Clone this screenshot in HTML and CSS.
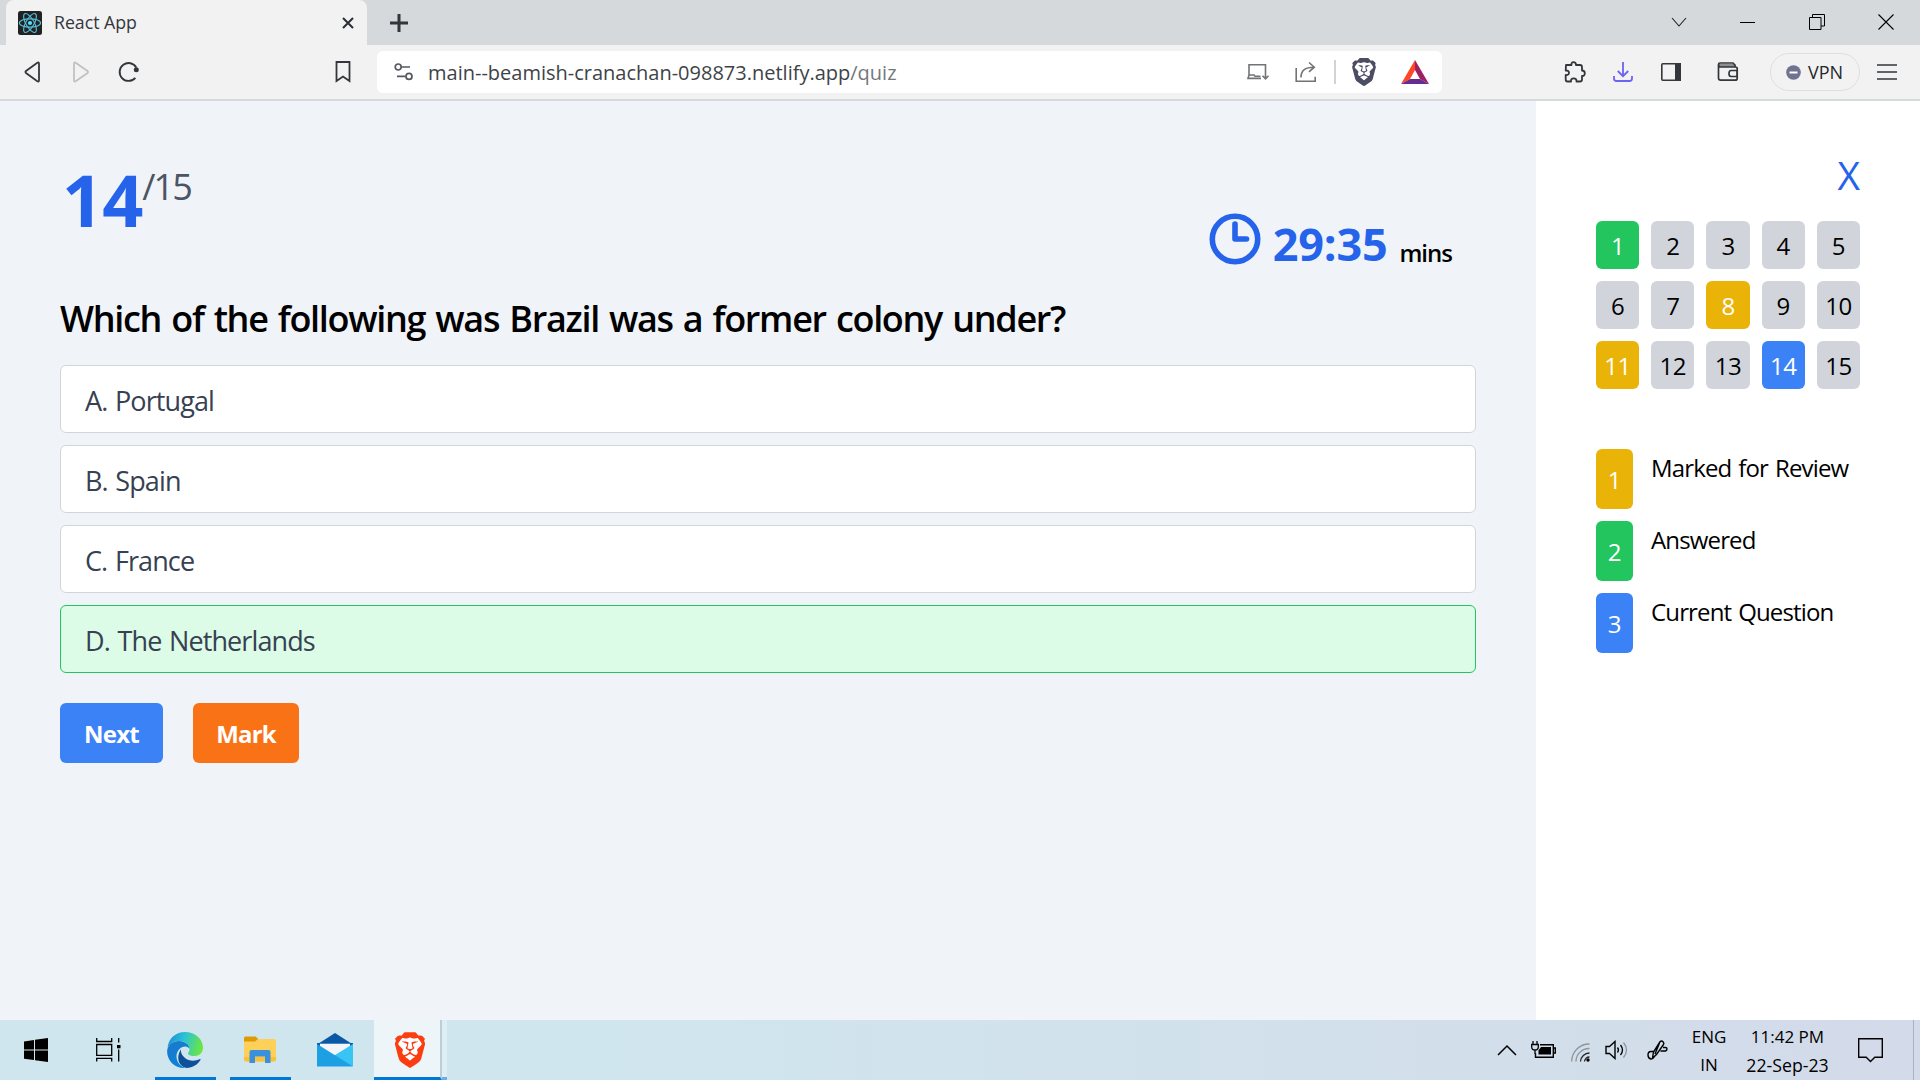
FILE: index.html
```html
<!DOCTYPE html>
<html lang="en">
<head>
<meta charset="utf-8">
<title>React App</title>
<link rel="stylesheet" href="styles.css">
</head>
<body>
<svg class="defs" width="0" height="0">
  <symbol id="lion" viewBox="1.9 0 20.2 24"><path d="M6 3h12l3 5-4 10-5 3-5-3L3.500 8z" fill="#fff"/><path fill="currentColor" d="M15.68 0l2.096 2.38s1.84-.512 2.709.358c.868.87 1.584 1.638 1.584 1.638l-.562 1.381.715 2.047s-2.104 7.98-2.35 8.955c-.486 1.919-.818 2.66-2.198 3.633-1.38.972-3.884 2.66-4.293 2.916-.409.256-.92.692-1.38.692-.46 0-.97-.436-1.38-.692a185.796 185.796 0 01-4.293-2.916c-1.38-.973-1.712-1.714-2.197-3.633-.247-.975-2.351-8.955-2.351-8.955l.715-2.047-.562-1.381s.716-.768 1.585-1.638c.868-.87 2.708-.358 2.708-.358L8.321 0h7.360zm-3.679 14.936c-.14 0-1.038.317-1.758.69-.72.373-1.242.637-1.409.742-.167.104-.065.301.087.409.152.107 2.194 1.690 2.393 1.866.198.175.489.464.687.464.198 0 .49-.29.688-.464.198-.175 2.240-1.759 2.392-1.866.152-.108.254-.305.087-.41-.167-.104-.689-.368-1.410-.741-.72-.373-1.617-.69-1.757-.69zm0-11.278s-.409.001-1.022.206-1.278.46-1.584.46c-.307 0-2.581-.434-2.581-.434S4.119 7.152 4.119 7.849c0 .697.339.881.68 1.243l2.020 2.149c.192.203.59.511.356 1.066-.235.555-.58 1.260-.196 1.977.384.716 1.042 1.194 1.464 1.115.421-.08 1.412-.598 1.776-.834.364-.237 1.518-1.190 1.518-1.554 0-.365-1.193-1.020-1.413-1.168-.22-.15-1.226-.725-1.247-.95-.02-.227-.012-.293.284-.851.297-.559.831-1.304.742-1.800-.089-.495-.95-.753-1.565-.986-.615-.232-1.799-.671-1.947-.74-.148-.068-.11-.133.339-.175.448-.043 1.719-.212 2.292-.052.573.16 1.552.403 1.632.532.079.13.149.134.067.579-.081.445-.5 2.581-.541 2.960-.04.38-.12.63.288.724.409.094 1.097.256 1.333.256s.924-.162 1.333-.256c.408-.093.329-.344.288-.723-.04-.38-.46-2.516-.541-2.961-.082-.445-.012-.45.067-.579.08-.129 1.059-.372 1.632-.532.573-.16 1.845.009 2.292.052.449.042.487.107.339.175-.148.069-1.332.508-1.947.74-.615.233-1.476.49-1.565.986-.09.496.445 1.241.742 1.800.297.558.304.624.284.85-.02.226-1.026.802-1.247.95-.22.15-1.413.804-1.413 1.169 0 .364 1.154 1.317 1.518 1.554.364.236 1.355.755 1.776.834.422.079 1.080-.4 1.464-1.115.384-.716.039-1.422-.195-1.977-.235-.555.163-.863.355-1.066l2.020-2.149c.341-.362.68-.546.68-1.243 0-.697-2.695-3.960-2.695-3.960s-2.274.436-2.580.436c-.307 0-.972-.256-1.585-.461-.613-.205-1.022-.206-1.022-.206z"/></symbol>
</svg>
<div class="screen">
  <div class="tabstrip">
    <div class="tab">
      <svg class="favicon" width="24" height="24" viewBox="0 0 24 24"><rect width="24" height="24" rx="2.5" fill="#222"/><g fill="none" stroke="#53c1de" stroke-width="1.1"><ellipse cx="12" cy="12" rx="10.6" ry="4.1"/><ellipse cx="12" cy="12" rx="10.6" ry="4.1" transform="rotate(60 12 12)"/><ellipse cx="12" cy="12" rx="10.6" ry="4.1" transform="rotate(120 12 12)"/></g><circle cx="12" cy="12" r="2.1" fill="#61dafb"/></svg>
      <span class="tab-title">React App</span>
      <svg class="tab-close" width="14" height="14" viewBox="0 0 14 14"><path d="M2 2l10 10M12 2L2 12" stroke="#2b2f33" stroke-width="2" fill="none"/></svg>
    </div>
    <svg class="new-tab" width="20" height="20" viewBox="0 0 20 20"><path d="M10 1v18M1 10h18" stroke="#33373b" stroke-width="3"/></svg>
    <div class="window-controls">
      <svg width="16" height="16" viewBox="0 0 16 16"><path d="M1 4l7 8 7-8" fill="none" stroke="#222" stroke-width="1.1"/></svg>
      <svg width="16" height="16" viewBox="0 0 16 16"><path d="M0 8.500h15" stroke="#000"/></svg>
      <svg width="16" height="16" viewBox="0 0 16 16"><path d="M.5 3.500h11.500v12H.5zM3.500 3.500v-3h12v11.500h-3.500" fill="none" stroke="#000"/></svg>
      <svg width="16" height="16" viewBox="0 0 16 16"><path d="M.5.5l15 15M15.500.5l-15 15" fill="none" stroke="#000" stroke-width="1.1"/></svg>
    </div>
  </div>

  <div class="toolbar">
    <div class="nav">
      <svg width="18" height="22" viewBox="0 0 18 22"><path d="M13.300 1.700q1.700-.8 1.700 1v16.600q0 1.800-1.700 1L2 12q-1-1 0-2z" fill="none" stroke="#33373b" stroke-width="1.800"/></svg>
      <svg width="18" height="22" viewBox="0 0 18 22"><path d="M3.700 1.700q-1.700-.8-1.700 1v16.600q0 1.800 1.700 1L15.500 12q1-1 0-2z" fill="none" stroke="#bfc1c3" stroke-width="1.800"/></svg>
      <svg class="reload" width="22" height="22" viewBox="0 0 22 22"><path d="M17.300 16.800A8.900 8.900 0 1 1 18.300 6.600" fill="none" stroke="#33373b" stroke-width="1.900"/><circle cx="18.300" cy="8.800" r="2.500" fill="#33373b"/></svg>
    </div>
    <svg class="bookmark" width="16" height="22" viewBox="0 0 16 22"><path d="M1.500 1h13v19L8 15.500 1.500 20z" fill="none" stroke="#33373b" stroke-width="1.800"/></svg>
    <div class="address">
      <svg class="site-info" width="20" height="18" viewBox="0 0 20 18"><g fill="none" stroke="#55595d" stroke-width="1.700"><circle cx="4.200" cy="4" r="3"/><path d="M7.500 4H16M3 13.400h8.500"/><circle cx="15" cy="13.400" r="3"/></g></svg>
      <span class="url">main--beamish-cranachan-098873.netlify.app<span class="url-path">/quiz</span></span>
      <svg class="install" width="24" height="20" viewBox="0 0 24 20"><g fill="none" stroke="#717375" stroke-width="1.600"><path d="M3 13V2.800h16.500v6M3 13l-1 3.400h13M2.500 13H8l1 1.300h5.500M19.500 8v9M16.500 13.800l3 3 3-3"/></g></svg>
      <svg class="share" width="22" height="22" viewBox="0 0 22 22"><g fill="none" stroke="#717375" stroke-width="1.600"><path d="M1.200 7v13.300h19v-4.500M6 16.500Q6 6 19 6.200M14 1.500l5.300 4.700-5.300 4.600"/></g></svg>
      <span class="divider"></span>
      <svg class="shield" width="24" height="28"><use href="#lion"/></svg>
      <svg class="bat" width="28" height="24" viewBox="0 0 28 24"><path d="M14 0L0 24l9-5 5-9z" fill="#ff4724"/><path d="M14 0l14 24-9-5-5-9z" fill="#9e1f63"/><path d="M0 24h28l-9-5H9z" fill="#662d91"/></svg>
    </div>
    <div class="actions">
      <svg class="ext" width="22" height="22" viewBox="0 0 22 22"><path d="M2 4h5.500Q7 1.200 9.500 1.200T12 4h4q2 0 2 2v3.500q2.800 0 2.800 2.800T18 15v3.500q0 2-2 2h-3.500q.2-3.200-2.800-3.200T7 20.500H3.500q-1.800 0-1.800-2V14q3.300.3 3.300-2.200T1.700 9.500z" fill="none" stroke="#33373b" stroke-width="1.800" stroke-linejoin="round"/></svg>
      <svg class="down" width="20" height="20" viewBox="0 0 20 20"><path d="M10 0v14M4.800 9l5.200 5.200L15.200 9M1 14v2.500Q1 19 3.500 19h13q2.500 0 2.500-2.500V14" fill="none" stroke="#6b63f2" stroke-width="1.800"/></svg>
      <svg class="panel" width="20" height="18" viewBox="0 0 20 18"><rect x=".8" y=".8" width="18.400" height="16.400" rx="1" fill="none" stroke="#33373b" stroke-width="1.600"/><path d="M14 0h6v18h-6z" fill="#33373b"/></svg>
      <svg class="wallet" width="22" height="20" viewBox="0 0 22 20"><path d="M2 2h15l2 2v1H2z" fill="#8d8f91"/><path d="M1.500 2.500Q1.500 1 3 1h13l2 2v2M1.500 2.500V16q0 2.200 2.200 2.200h14.500q2 0 2-2V6.500q0-1.500-2-1.500H3.500Q1.500 4.800 1.500 2.500zM20 8.500h-6q-2 0-2 3t2 3h6z" fill="none" stroke="#33373b" stroke-width="1.700"/></svg>
      <span class="vpn"><svg width="15" height="15" viewBox="0 0 15 15"><circle cx="7.500" cy="7.500" r="7.300" fill="#6f7390"/><path d="M3.500 7.500h8" stroke="#fff" stroke-width="2"/></svg><span>VPN</span></span>
      <svg class="menu" width="20" height="16" viewBox="0 0 20 16"><path d="M0 1h20M0 8h20M0 15h20" stroke="#33373b" stroke-width="1.700"/></svg>
    </div>
  </div>

  <div class="page">
    <main class="quiz">
      <header class="quiz-head">
        <div class="counter"><span class="current">14</span><span class="total">/15</span></div>
        <div class="timer">
          <svg width="52" height="52" viewBox="0 0 52 52"><circle cx="26" cy="26" r="22.700" fill="none" stroke="#2563eb" stroke-width="5.600"/><path d="M26 11v15h11.500" fill="none" stroke="#2563eb" stroke-width="5.600" stroke-linecap="round" stroke-linejoin="round"/></svg>
          <span class="time">29:35</span><span class="unit">mins</span>
        </div>
      </header>
      <h1 class="question">Which of the following was Brazil was a former colony under?</h1>
      <div class="options">
        <div class="option">A. Portugal</div>
        <div class="option">B. Spain</div>
        <div class="option">C. France</div>
        <div class="option selected">D. The Netherlands</div>
      </div>
      <div class="buttons">
        <button class="btn next">Next</button>
        <button class="btn mark">Mark</button>
      </div>
    </main>
    <aside class="side">
      <div class="close">X</div>
      <div class="grid">
        <span class="cell answered">1</span><span class="cell">2</span><span class="cell">3</span><span class="cell">4</span><span class="cell">5</span>
        <span class="cell">6</span><span class="cell">7</span><span class="cell review">8</span><span class="cell">9</span><span class="cell">10</span>
        <span class="cell review">11</span><span class="cell">12</span><span class="cell">13</span><span class="cell active">14</span><span class="cell">15</span>
      </div>
      <div class="legend">
        <div class="legend-row"><span class="tag review">1</span><span class="legend-label">Marked for Review</span></div>
        <div class="legend-row"><span class="tag answered">2</span><span class="legend-label">Answered</span></div>
        <div class="legend-row"><span class="tag active">3</span><span class="legend-label">Current Question</span></div>
      </div>
    </aside>
  </div>

  <div class="taskbar">
    <div class="task start"><svg width="24" height="24" viewBox="0 0 24 24"><path d="M0 3.400L10 2v9.500H0zM11 1.800L24 0v11.500H11zM0 12.500h10V22L0 20.700zM11 12.500h13V24l-13-1.800z" fill="#000"/></svg></div>
    <div class="task view"><svg width="25" height="24" viewBox="0 0 25 24"><path d="M.7 0v3.500h15V0M.7 6.500h15v10.800h-15zM.7 23.500v-3.200h15v3.200M22.700 0v4.500M22.700 11.500v12" fill="none" stroke="#000" stroke-width="1.300"/><path d="M21 7h3.500v3.300H21z"/></svg></div>
    <div class="task edge running">
      <svg width="36" height="36" viewBox="0 0 36 36"><defs><linearGradient id="e1" x1="0" y1=".3" x2="1" y2=".5"><stop offset="0" stop-color="#1b8fd6"/><stop offset=".45" stop-color="#2cc3d5"/><stop offset="1" stop-color="#6be83e"/></linearGradient><linearGradient id="e2" x1="0" y1="0" x2=".7" y2="1"><stop offset="0" stop-color="#1c78c9"/><stop offset="1" stop-color="#0a84dc"/></linearGradient><linearGradient id="e3" x1="0" y1="0" x2="1" y2="1"><stop offset="0" stop-color="#0b4f96"/><stop offset="1" stop-color="#12519d"/></linearGradient></defs><path d="M.5 16C1.500 6 9 0 18 0c10.500 0 18 7.500 18 15.500 0 5-3.500 8.500-8.500 8.500-4 0-6.500-1.300-6.500-2.600 0-.8 1.500-1.700 1.500-4.200 0-5-5-8.200-10.500-8.200C6 9 2 12.500.5 16z" fill="url(#e1)"/><path d="M.1 19C.6 12.500 6 9 12 9c6 0 10.500 3.700 10.500 8 0-1-2-2.500-4.500-2.500-4 0-8.500 4-8.500 10 0 5.500 4 10.500 10 11.400C9 37 0 29.500.1 19z" fill="url(#e2)"/><path d="M14 17.500c-4 5.500-4.500 16 5.500 18.400C25.500 36 31 32.500 33.400 28c.5-.9-.2-1.200-.9-.8C28.500 29.200 22 29.500 18 26c-3-2.600-4.500-5.500-4-8.500z" fill="url(#e3)"/></svg>
    </div>
    <div class="task files running"><svg width="32" height="28" viewBox="0 0 32 28"><path d="M0 5V2q0-1.500 1.500-1.500h10L15.500 4 12 8H0z" fill="#dd9a05"/><path d="M0 5.500h11l3-2.500h16q2 0 2 2v18.500q0 2-2 2H2q-2 0-2-2z" fill="#fdd05a"/><path d="M0 21h32v2.500q0 2-2 2H2q-2 0-2-2z" fill="#f9c03c"/><path d="M5.500 27V16q0-2 2-2h17q2 0 2 2v11h-5.500v-6.500H11V27z" fill="#3990dc"/></svg></div>
    <div class="task mail"><svg width="36" height="34" viewBox="0 0 36 34"><path d="M0 11.500L18 0l18 11.500z" fill="#0a58a6"/><path d="M0 10h36v10H0z" fill="#0d5dad"/><path d="M3 10.800h30v6L18 24 3 16z" fill="#f3f5f8"/><path d="M36 11v22H0L18 22z" fill="#38c5f4"/><path d="M0 11v22.500h36L0 11z" fill="#1d9fe3"/></svg></div>
    <div class="task brave running"><svg width="30" height="36"><use href="#lion"/></svg></div>
    <div class="task stacked running"></div>
    <div class="tray">
      <svg class="chev" width="20" height="12" viewBox="0 0 20 12"><path d="M1 11l9-9 9 9" fill="none" stroke="#000" stroke-width="1.500"/></svg>
      <svg class="battery" width="25" height="18" viewBox="0 0 25 18"><path d="M9 3.700h13.300v12.600H4.500v-4M22.500 7h1.800v5h-1.800" fill="none" stroke="#000" stroke-width="1.400"/><path d="M7.500 13.500v-4L10 6h10v7.500z"/><path d="M2 0v3M6 0v3M.7 3.500h6.600V6q0 3-3.300 3T.7 6zM4 9v4" fill="none" stroke="#000" stroke-width="1.300"/></svg>
      <svg class="wifi" width="19" height="19" viewBox="0 0 19 19"><g fill="none" stroke-width="1.300"><path d="M.7 18.500A17.500 17.500 0 0 1 18.500 1M5 18.500A13 13 0 0 1 18.500 5.500" stroke="#8d949d"/><path d="M9.500 18.500A9 9 0 0 1 18.500 10M13.500 18.500a5 5 0 0 1 5-4.500" stroke="#222"/></g><circle cx="17" cy="17" r="1.700"/></svg>
      <svg class="sound" width="23" height="20" viewBox="0 0 23 20"><path d="M1 6.500h3.500L10 1.500v17l-5.500-5H1z" fill="none" stroke="#000" stroke-width="1.400"/><path d="M12.500 7.500q2 2.500 0 5M15.500 5q4 5 0 10" fill="none" stroke="#000" stroke-width="1.300"/><path d="M18.500 2.500q6 7.500 0 15" fill="none" stroke="#8d949d" stroke-width="1.300"/></svg>
      <svg class="pen" width="21" height="20" viewBox="0 0 21 20"><path d="M5.500 18l1-6L13 1.800q1.500-1.600 3 0t.5 2.700L9.500 14.500zM12.500 3L8 14M6.500 11.500H4Q1 11.500 1 15t3 4q2 .2 4-3M16 7.500h2.500q1.500 0 1.500 1.500t-1.500 2H13.500" fill="none" stroke="#000" stroke-width="1.400"/></svg>
      <div class="stack lang"><span>ENG</span><span>IN</span></div>
      <div class="stack clock"><span>11:42 PM</span><span class="date">22-Sep-23</span></div>
      <svg class="notify" width="25" height="25" viewBox="0 0 25 25"><path d="M.7.7h23.600v18.600h-7.500L12.500 23.500 8.200 19.300H.7z" fill="none" stroke="#000" stroke-width="1.400"/></svg>
      <span class="peek"></span>
    </div>
  </div>
</div>
</body>
</html>
```
FILE: styles.css
```css
* { box-sizing: border-box; }
body { margin: 0; font-family: "Open Sans", "Noto Sans", sans-serif; color: #000; }
svg { display: block; flex: none; }
.defs { display: none; }
.screen { width: 1920px; height: 1080px; display: flex; flex-direction: column; overflow: hidden; white-space: nowrap; }

/* Tab strip */
.tabstrip { height: 45px; flex: none; background: #d5d9dc; display: flex; align-items: center; padding-left: 6px; }
.tab { width: 361px; height: 45px; background: #f2f2f2; border-radius: 8px 8px 0 0; display: flex; align-items: center; padding: 0 12px; }
.tab-title { flex: 1; margin-left: 12px; font-size: 17.700px; line-height: 22px; padding-bottom: 1px; color: #33373b; }
.new-tab { margin-left: 22px; }
.window-controls { margin-left: auto; display: flex; gap: 53px; padding-right: 26px; margin-top: -2px; }

/* Toolbar */
.toolbar { height: 56px; flex: none; background: #f2f2f2; border-bottom: 2px solid #d5dadd; display: flex; align-items: center; }
.nav { display: flex; align-items: center; gap: 30px; width: 335px; padding-left: 24px; }
.reload { margin-left: -2px; }
.bookmark { margin-right: 26px; }
.address { width: 1065px; height: 42px; background: #fff; border-radius: 6px; display: flex; align-items: center; padding-left: 17px; }
.url { width: 818px; margin-left: 14px; font-size: 20px; color: #3e4347; }
.url-path { color: #74787c; }
.share { margin-left: 25px; }
.divider { width: 2px; height: 24px; background: #d2d3d4; margin-left: 17px; }
.shield { margin-left: 16px; color: #4b4e62; }
.bat { margin-left: 25px; }
.actions { display: flex; align-items: center; margin-left: 122px; }
.down { margin-left: 27px; }
.panel { margin-left: 28px; }
.wallet { margin-left: 36px; }
.vpn { width: 90px; height: 38px; margin-left: 31px; border: 1.500px solid #dedfdf; border-radius: 19px; display: flex; align-items: center; padding-left: 15px; gap: 7px; font-size: 18px; color: #25282b; }
.menu { margin-left: 17px; }

/* Quiz */
.page { flex: 1; display: flex; min-height: 0; }
.quiz { width: 1536px; background: #f0f4f9; padding: 60px; }
.quiz-head { height: 130px; display: flex; justify-content: space-between; }
.counter { display: flex; align-items: flex-start; padding-left: 2px; }
.current { font-size: 72px; line-height: 77px; font-weight: 700; color: #2563eb; letter-spacing: -1px; }
.total { font-size: 36px; line-height: 52px; font-weight: 500; color: #4b5563; letter-spacing: -2px; }
.timer { display: flex; align-items: flex-start; padding-top: 46px; padding-right: 24px; }
.timer svg { margin-top: 6px; margin-right: 12px; }
.time { font-size: 45px; line-height: 74px; font-weight: 700; color: #2563eb; letter-spacing: -0.200px; }
.unit { font-size: 24px; line-height: 91px; font-weight: 600; margin-left: 12px; letter-spacing: -1px; }
.question { margin: 0 0 19px; padding-top: 1px; font-size: 36px; line-height: 54px; font-weight: 600; letter-spacing: -1.300px; word-spacing: 2px; }
.options { display: flex; flex-direction: column; gap: 12px; width: 1416px; }
.option { height: 68px; border: 1.500px solid #d1d5db; border-radius: 6px; background: #fff; padding: 2px 0 0 24px; display: flex; align-items: center; font-size: 27px; color: #374151; letter-spacing: -0.900px; word-spacing: 1.500px; }
.option.selected { background: #dcfce7; border-color: #22c55e; }
.buttons { display: flex; gap: 30px; margin-top: 30px; }
.btn { height: 60px; border: 0; border-radius: 6px; padding: 0; font: 700 24px "Open Sans", sans-serif; color: #fff; letter-spacing: -0.800px; }
.next { width: 103px; background: #3b82f6; }
.mark { width: 106px; background: #f97316; }

/* Question palette */
.side { width: 384px; background: #fff; padding: 60px; }
.close { height: 60px; font-size: 39px; line-height: 27px; font-weight: 500; color: #2563eb; text-align: right; }
.grid { display: grid; grid-template-columns: repeat(5, 1fr); gap: 12px; }
.cell { height: 48px; border-radius: 6px; background: #d1d5db; display: flex; align-items: center; justify-content: center; padding-top: 1px; font-size: 24px; letter-spacing: -0.500px; }
.legend { margin-top: 60px; display: flex; flex-direction: column; gap: 12px; }
.legend-row { display: flex; height: 60px; gap: 18px; }
.tag { width: 37px; border-radius: 6px; display: flex; align-items: center; justify-content: center; font-size: 24px; }
.legend-label { font-size: 24px; line-height: 38px; letter-spacing: -0.850px; word-spacing: 1.500px; }
.answered, .review, .active { color: #fff; }
.answered { background: #22c55e; }
.review { background: #eab308; }
.active { background: #3b82f6; }

/* Taskbar */
.taskbar { height: 60px; flex: none; background: linear-gradient(90deg, #d0e6ee 0%, #d0e6ee 30%, #d2dfeb 75%, #d3dae9 100%); display: flex; }
.task { height: 60px; display: flex; align-items: center; justify-content: center; }
.start { width: 72px; }
.view { width: 72px; }
.edge { width: 61px; margin-left: 11px; padding-right: 1px; }
.files { width: 61px; margin-left: 14px; padding-right: 1px; }
.mail { width: 72px; margin-left: 8px; }
.brave { width: 68px; margin-left: 3px; padding-left: 6px; background: #edf5f9; border-right: 2px solid #bad0d8; color: #fc3d12; }
.stacked { width: 5px; background: #dfeef5; }
.running { border-bottom: 3px solid #0078d7; padding-top: 3px; }
.stacked.running { border-bottom-color: #6aaee4; }
.tray { margin-left: auto; display: flex; align-items: center; }
.battery { margin-left: 14px; }
.wifi { margin-left: 15px; margin-top: 4px; }
.sound { margin-left: 15px; }
.pen { margin-left: 19px; }
.stack { display: flex; flex-direction: column; align-items: center; font-size: 17px; line-height: 28px; padding-top: 1px; }
.lang { width: 50px; margin-left: 16px; }
.clock { width: 100px; margin-left: 3.500px; }
.date { font-size: 17.700px; }
.notify { margin-left: 20px; }
.peek { width: 1.500px; height: 60px; background: #a9b1c0; margin: 0 6px 0 30px; }
```
